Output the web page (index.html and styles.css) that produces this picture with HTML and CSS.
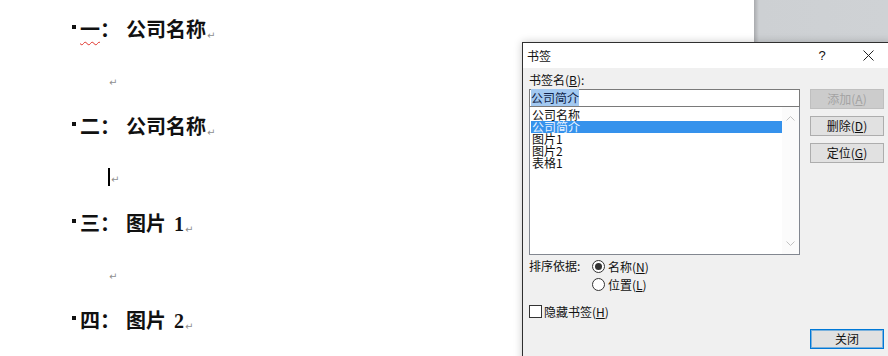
FILE: index.html
```html
<!DOCTYPE html>
<html lang="zh-CN">

<head>
  <meta charset="UTF-8">
  <title>书签</title>
  <link rel="stylesheet" href="styles.css">
</head>

<body>
  <div class="workspace">
    <div class="page">
      <p class="para heading"><span class="bullet"></span><span class="num"><span class="typo">一</span>：</span>公司名称<span class="pm">↵</span></p>
      <p class="para empty"><span class="pm">↵</span></p>
      <p class="para heading"><span class="bullet"></span><span class="num">二：</span>公司名称<span class="pm">↵</span></p>
      <p class="para empty"><span class="caret"></span><span class="pm">↵</span></p>
      <p class="para heading"><span class="bullet"></span><span class="num">三：</span>图片 1<span class="pm">↵</span></p>
      <p class="para empty"><span class="pm">↵</span></p>
      <p class="para heading"><span class="bullet"></span><span class="num">四：</span>图片 2<span class="pm">↵</span></p>
    </div>
    <div class="gutter"></div>
  </div>

  <!-- bookmark dialog floats over the document -->
  <div class="dialog">
    <div class="titlebar">
      <span class="title">书签</span>
      <span class="tb-btn help">?</span>
      <span class="tb-btn close">
        <svg width="11" height="11" viewBox="0 0 11 11"><path d="M0.5 0.5 L10.5 10.5 M10.5 0.5 L0.5 10.5" stroke="#222" stroke-width="1" fill="none"/></svg>
      </span>
    </div>

    <div class="dlg-body">
      <div class="left-col">
        <div class="field-label">书签名(<u>B</u>):</div>
        <div class="text-input"><span class="sel-text">公司简介</span></div>
        <div class="listbox">
          <div class="items">
            <div class="item">公司名称</div>
            <div class="item selected">公司简介</div>
            <div class="item">图片1</div>
            <div class="item">图片2</div>
            <div class="item">表格1</div>
          </div>
          <div class="scrollbar">
            <svg width="9" height="5" viewBox="0 0 9 5"><path d="M0.5 4.5 L4.5 0.5 L8.5 4.5" stroke="#c2c2c2" fill="none"/></svg>
            <svg width="9" height="5" viewBox="0 0 9 5"><path d="M0.5 0.5 L4.5 4.5 L8.5 0.5" stroke="#c2c2c2" fill="none"/></svg>
          </div>
        </div>

        <div class="sort">
          <div class="sort-label">排序依据:</div>
          <div class="sort-options">
            <label class="option"><span class="radio on"></span><span>名称(<u>N</u>)</span></label>
            <label class="option"><span class="radio"></span><span>位置(<u>L</u>)</span></label>
          </div>
        </div>

        <label class="option hide-row"><span class="checkbox"></span><span>隐藏书签(<u>H</u>)</span></label>
      </div>

      <div class="right-col">
        <div class="btn disabled">添加(<u>A</u>)</div>
        <div class="btn">删除(<u>D</u>)</div>
        <div class="btn">定位(<u>G</u>)</div>
      </div>

      <div class="btn btn-close">关闭</div>
    </div>
  </div>
</body>

</html>
```

FILE: styles.css
```css
body {
  margin: 0;
  width: 888px;
  height: 356px;
  overflow: hidden;
  position: relative;
  background: #fff;
}

.workspace {
  display: flex;
  height: 356px;
}

/* document page */
.page {
  width: 754px;
  box-sizing: border-box;
  padding: 6px 0 0 72px;
  background: #fff;
}

.para {
  margin: 0;
  height: 48.5px;
  line-height: 48.5px;
  white-space: nowrap;
}

.heading {
  font-family: "Liberation Serif", "Noto Sans CJK SC", serif;
  font-size: 20px;
  font-weight: bold;
  color: #111;
  word-spacing: 3px;
}

.bullet {
  display: inline-block;
  width: 4px;
  height: 4px;
  background: #111;
  margin-right: 4px;
  vertical-align: 8px;
}

.num {
  display: inline-block;
  width: 46px;
}

.typo {
  text-decoration: underline wavy #e0342c;
  text-decoration-thickness: 1px;
  text-underline-offset: 4px;
}

.empty {
  padding-left: 36px;
}

.pm {
  font-family: "DejaVu Sans", sans-serif;
  font-size: 10px;
  font-weight: normal;
  color: #8f8f8f;
  margin-left: 1px;
  vertical-align: -2px;
}

.caret {
  display: inline-block;
  width: 2px;
  height: 18px;
  background: #000;
  vertical-align: middle;
}

.gutter {
  flex: 1;
  background: linear-gradient(to right, #a9abae 0, #bfc1c4 3px, #cdd0d3 5px, #cfd2d5 100%);
}

/* dialog */
.dialog {
  position: absolute;
  left: 522px;
  top: 42px;
  width: 370px;
  height: 330px;
  box-sizing: border-box;
  border: 1px solid #2f2f2f;
  background: #f0f0f0;
  box-shadow: 0 0 8px rgba(0, 0, 0, 0.22);
  font-family: "Noto Sans CJK SC", sans-serif;
  font-size: 12px;
  color: #111;
}

.titlebar {
  display: flex;
  align-items: center;
  height: 25px;
  background: #fff;
  padding-left: 4px;
}

.title {
  flex: 1;
}

.tb-btn {
  width: 46px;
  height: 25px;
  display: flex;
  align-items: center;
  justify-content: center;
}

.help {
  font-family: "Liberation Sans", sans-serif;
  font-size: 13px;
}

.dlg-body {
  display: grid;
  grid-template-columns: 271px 74px;
  column-gap: 10px;
  padding: 4px 0 0 6px;
}

.left-col {
  display: flex;
  flex-direction: column;
}

.field-label {
  height: 17px;
  line-height: 15px;
}

.text-input {
  height: 18px;
  box-sizing: border-box;
  border: 1px solid #7a7a7a;
  background: #fff;
  padding-left: 1px;
  line-height: 15px;
}

.sel-text {
  background: #a3c9f1;
  color: #0f1f4a;
}

.listbox {
  display: flex;
  height: 148px;
  box-sizing: border-box;
  border: 1px solid #828790;
  border-top: none;
  background: #fff;
}

.items {
  flex: 1;
  padding: 2px 0 0 1px;
}

.item {
  height: 12px;
  line-height: 12px;
  padding-left: 1px;
}

.item.selected {
  background: #3592ec;
  color: #e8f2ff;
}

.scrollbar {
  width: 17px;
  background: #fbfbfb;
  display: flex;
  flex-direction: column;
  align-items: center;
  justify-content: space-between;
  padding: 9px 0 8px;
  box-sizing: border-box;
}

.sort {
  display: grid;
  grid-template-columns: 63px auto;
  margin-top: 2px;
}

.sort-label {
  line-height: 18px;
}

.option {
  display: flex;
  align-items: center;
  height: 18px;
  gap: 3px;
}

.radio {
  width: 13px;
  height: 13px;
  box-sizing: border-box;
  border: 1px solid #333;
  border-radius: 50%;
  background: #fff;
  display: flex;
  align-items: center;
  justify-content: center;
}

.radio.on::after {
  content: '';
  width: 7px;
  height: 7px;
  border-radius: 50%;
  background: #333;
}

.hide-row {
  margin-top: 9px;
  gap: 2px;
}

.checkbox {
  width: 13px;
  height: 13px;
  box-sizing: border-box;
  border: 1px solid #333;
  background: #fff;
}

.right-col {
  display: flex;
  flex-direction: column;
  gap: 7px;
  padding-top: 17px;
}

.btn {
  height: 20px;
  box-sizing: border-box;
  border: 1px solid #adadad;
  background: #e1e1e1;
  text-align: center;
  line-height: 17px;
}

.btn.disabled {
  background: #cccccc;
  border-color: #bfbfbf;
  color: #a3a3a3;
}

.btn-close {
  grid-column: 2;
  margin-top: 9px;
  border-color: #0078d7;
  box-shadow: inset 0 0 0 1px rgba(0, 120, 215, 0.45);
}
```
